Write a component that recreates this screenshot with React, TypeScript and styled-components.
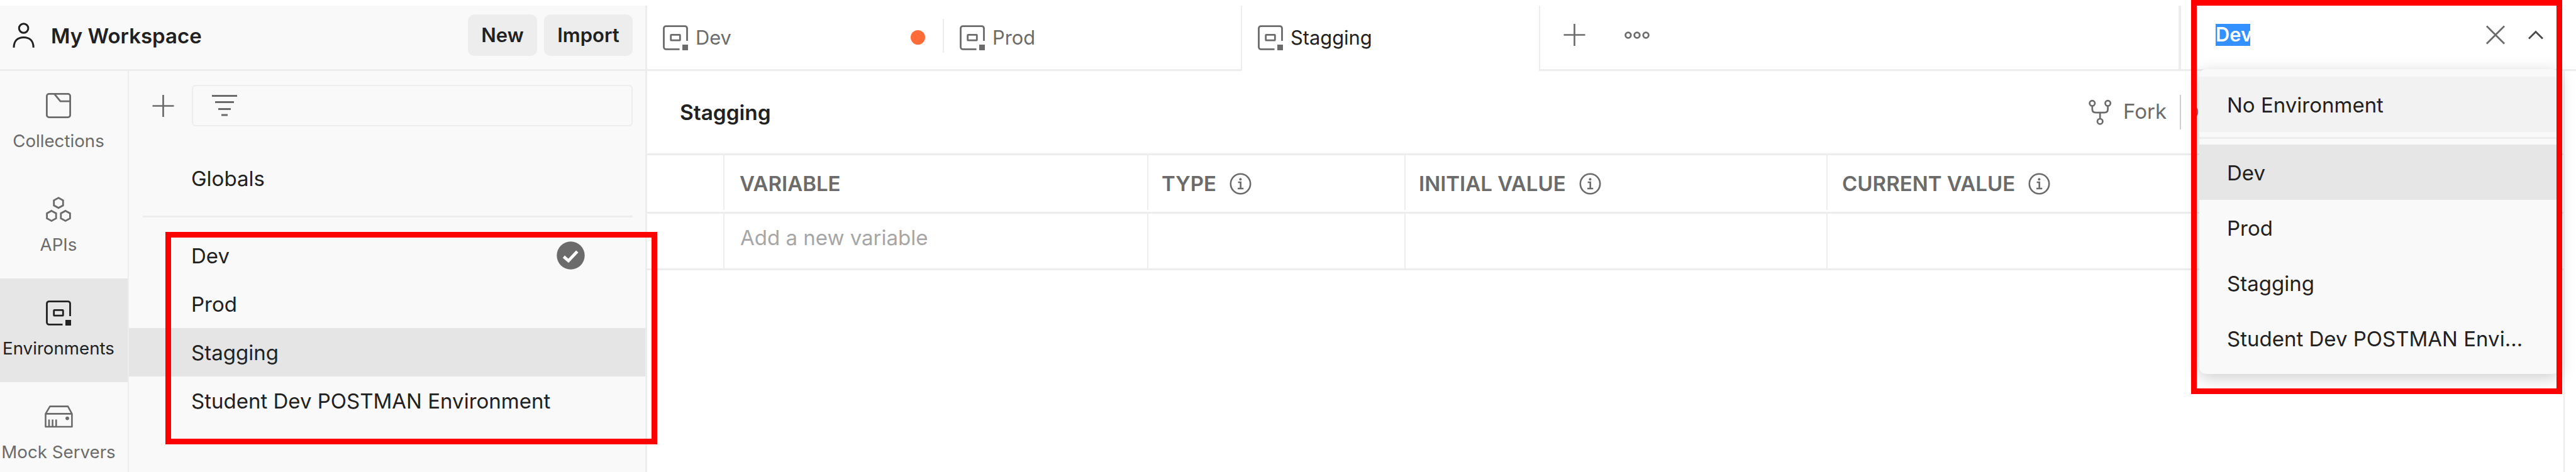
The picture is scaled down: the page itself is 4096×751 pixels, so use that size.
import React from 'react';
import styled, { createGlobalStyle, css } from 'styled-components';

const line = '#ededed';
const ink = '#212121';
const muted = '#6b6b6b';

const GlobalStyle = createGlobalStyle`
  * { box-sizing: border-box; }
  html, body { margin: 0; padding: 0; background: #fff; overflow: hidden; }
  body {
    font-family: Inter, "Liberation Sans", sans-serif;
    font-size: 33px;
    line-height: 40px;
    color: ${ink};
  }
  svg { display: block; flex: none; }
`;

const Page = styled.div`
  position: relative;
  display: flex;
  width: 4096px;
  height: 751px;
  padding-top: 9px;
  overflow: hidden;
  background: #fff;
`;

/* ---------- left column ---------- */

const LeftColumn = styled.div`
  display: flex;
  flex-direction: column;
  flex: none;
  width: 1029px;
  background: #f9f9f9;
  border-right: 3px solid ${line};
`;

const WorkspaceHeader = styled.header`
  display: flex;
  align-items: center;
  flex: none;
  height: 104px;
  padding: 0 20px 8px;
  border-bottom: 3px solid ${line};
`;

const WorkspaceName = styled.div`
  flex: 1;
  margin: 2px 0 0 25px;
  font-weight: 600;
`;

const HeaderButton = styled.button<{ $width: number }>`
  width: ${p => p.$width}px;
  height: 66px;
  margin-left: 11px;
  padding: 0;
  border: 0;
  border-radius: 10px;
  background: #ededed;
  color: ${ink};
  font: 600 31px/66px Inter, "Liberation Sans", sans-serif;
  text-align: center;
`;

const LeftBody = styled.div`
  display: flex;
  flex: 1;
  min-height: 0;
`;

const Rail = styled.nav`
  flex: none;
  width: 205px;
  overflow: hidden;
  border-right: 2px solid ${line};
`;

const RailItem = styled.div<{ $active?: boolean }>`
  display: flex;
  flex-direction: column;
  align-items: center;
  height: 165px;
  padding: 35px 17px 0 0;
  font-size: 27.7px;
  white-space: nowrap;
  color: ${p => (p.$active ? ink : muted)};
  background: ${p => (p.$active ? '#e6e6e6' : 'transparent')};
`;

const RailIcon = styled.div`
  display: flex;
  align-items: center;
  justify-content: center;
  height: 40px;
  margin-bottom: 16px;
`;

const Sidebar = styled.aside`
  flex: 1;
  min-width: 0;
`;

const SidebarTools = styled.div`
  display: flex;
  align-items: center;
  height: 110px;
  padding: 0 20px 0 37px;
`;

const FilterBox = styled.div`
  display: flex;
  align-items: center;
  flex: 1;
  height: 66px;
  margin-left: 28px;
  padding-left: 30px;
  border: 2px solid ${line};
  border-radius: 6px;
`;

const GlobalsRow = styled.div`
  height: 123px;
  margin: 0 20px 0 22px;
  padding: 41px 0 0 77px;
  border-bottom: 3px solid ${line};
`;

const EnvironmentList = styled.div`
  padding-top: 22px;
`;

const EnvironmentRow = styled.div<{ $active?: boolean }>`
  display: flex;
  align-items: center;
  justify-content: space-between;
  height: 77px;
  padding: 0 96px 0 99px;
  white-space: nowrap;
  background: ${p => (p.$active ? '#e5e5e5' : 'transparent')};
`;

/* ---------- main area ---------- */

const Main = styled.main`
  display: flex;
  flex-direction: column;
  flex: 1;
  min-width: 0;
`;

const TabBar = styled.div`
  display: flex;
  flex: none;
  height: 104px;
`;

const Tab = styled.div<{ $active?: boolean }>`
  display: flex;
  align-items: center;
  flex: none;
  width: 472px;
  padding-left: 25px;
  font-size: 30.8px;
  color: ${muted};
  border-bottom: 3px solid ${line};
  ${p =>
    p.$active &&
    css`
      width: 476px;
      padding: 0 0 3px 25px;
      color: ${ink};
      border: solid ${line};
      border-width: 0 2px;
    `}
`;

const TabLabel = styled.span`
  flex: 1;
  margin-left: 12px;
`;

const UnsavedDot = styled.span`
  width: 23px;
  height: 23px;
  margin-right: 28px;
  border-radius: 50%;
  background: #ff6c37;
`;

const TabDivider = styled.span`
  width: 2px;
  height: 54px;
  margin-bottom: 6px;
  background: ${line};
`;

const TabActions = styled.div`
  display: flex;
  align-items: center;
  flex: 1;
  gap: 62px;
  padding: 0 0 8px 37px;
  border-bottom: 3px solid ${line};
`;

const EnvSelector = styled.div`
  position: relative;
  display: flex;
  align-items: center;
  flex: none;
  width: 632px;
  padding: 0 52px 8px 55px;
  border-left: 4px solid ${line};
  border-bottom: 3px solid ${line};
`;

const SelectedText = styled.span`
  width: 55px;
  height: 35px;
  margin-right: auto;
  font-size: 30.8px;
  font-weight: 600;
  line-height: 34px;
  color: #fff;
  background: #3390ff;
`;

const ChevronSlot = styled.span`
  margin-left: 37px;
`;

const EnvMenu = styled.div`
  position: absolute;
  top: 101px;
  left: 29px;
  z-index: 2;
  width: 572px;
  height: 485px;
  padding-top: 12px;
  border-radius: 10px;
  background: #f9f9f9;
  box-shadow: 0 6px 26px rgba(0, 0, 0, 0.2);
`;

const MenuItem = styled.div<{ $tone?: string }>`
  height: 88px;
  padding: 1px 50px 0 44px;
  line-height: 88px;
  white-space: nowrap;
  background: ${p => p.$tone || 'transparent'};
`;

const MenuDivider = styled.div`
  height: 3px;
  margin: 8px 0 9px;
  background: ${line};
`;

const Content = styled.section`
  flex: 1;
  width: 3049px;
  border-right: 2px solid ${line};
`;

const TitleRow = styled.div`
  display: flex;
  align-items: center;
  height: 134px;
  padding-left: 52px;
  border-bottom: 3px solid ${line};
`;

const Title = styled.h1`
  flex: 1;
  margin: 0;
  font-size: 33.4px;
  font-weight: 600;
  line-height: 40px;
`;

const ForkAction = styled.div`
  display: flex;
  align-items: center;
  width: 145px;
  color: ${muted};
`;

const ForkLabel = styled.span`
  margin: -3px 0 0 18px;
`;

const ActionDivider = styled.span`
  width: 2px;
  height: 55px;
  background: #d0d0d0;
`;

const ForkCount = styled.span`
  width: 608px;
  padding-left: 15px;
  font-size: 21px;
  color: ${muted};
`;

const TableRow = styled.div<{ $head?: boolean }>`
  display: grid;
  grid-template-columns: 123px 674px 409px 671px 1fr;
  height: ${p => (p.$head ? 93 : 90)}px;
  padding-bottom: ${p => (p.$head ? 3 : 0)}px;
  border-bottom: 3px solid ${line};
`;

const Cell = styled.div<{ $pad?: number; $head?: boolean }>`
  display: flex;
  align-items: center;
  padding: ${p => (p.$head ? '3px 0 0' : '0 0 11px')};
  padding-left: ${p => p.$pad || 0}px;
  font-weight: ${p => (p.$head ? 600 : 400)};
  color: ${p => (p.$head ? muted : '#a6a6a6')};
  border-right: 2px solid ${line};
  &:last-child { border-right: 0; }
  svg { margin-left: 21px; }
`;

const Highlight = styled.div<{ $x: number; $y: number; $w: number; $h: number }>`
  position: absolute;
  z-index: 5;
  left: ${p => p.$x}px;
  top: ${p => p.$y}px;
  width: ${p => p.$w}px;
  height: ${p => p.$h}px;
  border: 9px solid #ff0000;
  pointer-events: none;
`;

/* ---------- icons ---------- */

const UserIcon = () => (
  <svg width="36" height="40" viewBox="0 0 36 40" fill="none" stroke={ink} strokeWidth="3">
    <circle cx="17.6" cy="9" r="7.3" />
    <path d="M2 39.8C2 29 8 23.4 17.6 23.4S33.2 29 33.2 39.8" />
  </svg>
);

const CollectionIcon = () => (
  <svg width="40" height="40" viewBox="0 0 40 40" fill="none" stroke={muted} strokeWidth="2.8">
    <rect x="1.4" y="1.4" width="37.2" height="37.2" rx="3.5" />
    <path d="M13.6 1.6L23 13.2H38.4" />
  </svg>
);

const ApiIcon = () => (
  <svg width="40" height="40" viewBox="0 0 40 40" fill="none" stroke={muted} strokeWidth="2.8">
    <path d="M20 1.8l7.3 4v8l-7.3 4-7.3-4v-8z" />
    <path d="M8.9 22.4l7.3 4v8l-7.3 4-7.3-4v-8z" />
    <path d="M31.1 22.4l7.3 4v8l-7.3 4-7.3-4v-8z" />
  </svg>
);

const EnvironmentIcon = ({ color = muted }: { color?: string }) => (
  <svg width="40" height="40" viewBox="0 0 40 40" fill="none" stroke={color} strokeWidth="2.8">
    <path d="M26.5 38.4H5A3.5 3.5 0 0 1 1.5 35V5A3.5 3.5 0 0 1 5 1.6H35A3.5 3.5 0 0 1 38.5 5V25" />
    <rect x="12.7" y="15.4" width="14.6" height="8.8" rx="0.8" />
    <rect x="31" y="31" width="9" height="9" fill={color} stroke="none" />
  </svg>
);

const MockServerIcon = () => (
  <svg width="45" height="36" viewBox="0 0 45 36" fill="none" stroke={muted} strokeWidth="2.6">
    <path d="M1.5 13.4L8.4 1.6H37L43.4 13.4V34H1.5zM1.5 13.4H43.4" strokeLinejoin="round" />
    <path d="M7 22.5V34M12.6 22.5V34M18.3 22.5V34" />
    <circle cx="36" cy="20.6" r="2.9" fill={muted} stroke="none" />
  </svg>
);

const PlusIcon = () => (
  <svg width="35" height="35" viewBox="0 0 35 35" stroke={muted} strokeWidth="2.7">
    <path d="M17.5 0V35M0.5 17.5H34.5" />
  </svg>
);

const FilterIcon = () => (
  <svg width="40" height="36" viewBox="0 0 40 36" stroke={muted} strokeWidth="2.8">
    <path d="M0 2.5H40M5 12.5H35M10 23.5H30M15 33H25" />
  </svg>
);

const CheckedIcon = () => (
  <svg width="45" height="45" viewBox="0 0 45 45" fill="none">
    <circle cx="22.5" cy="22.5" r="22.2" fill={muted} />
    <path d="M11.4 24.4L18.9 31L32.8 16.2" stroke="#fff" strokeWidth="4.8" />
  </svg>
);

const MoreIcon = () => (
  <svg width="40" height="14" viewBox="0 0 40 14" fill="none" stroke={muted} strokeWidth="2.8">
    <circle cx="5.9" cy="7" r="4.3" />
    <circle cx="20" cy="7" r="4.3" />
    <circle cx="34.1" cy="7" r="4.3" />
  </svg>
);

const CloseIcon = () => (
  <svg width="30" height="31" viewBox="0 0 30 31" stroke={muted} strokeWidth="2.8">
    <path d="M1 1.5L29 29.5M29 1.5L1 29.5" />
  </svg>
);

const ChevronUpIcon = () => (
  <svg width="24" height="15" viewBox="0 0 24 15" fill="none" stroke="#4a4a4a" strokeWidth="3">
    <path d="M1 13.5L12 2.5L23 13.5" />
  </svg>
);

const ForkIcon = () => (
  <svg width="37" height="41" viewBox="0 0 37 41" fill="none" stroke={muted} strokeWidth="2.7">
    <circle cx="5.8" cy="6.3" r="4.2" />
    <circle cx="30.6" cy="6.3" r="4.2" />
    <circle cx="18.2" cy="35.2" r="4.2" />
    <path d="M5.8 10.5V15.5Q5.8 21.2 11.5 21.2H25Q30.6 21.2 30.6 15.5V10.5M18.2 21.2V31" />
  </svg>
);

const InfoIcon = () => (
  <svg width="35" height="35" viewBox="0 0 35 35" fill="none" stroke={muted} strokeWidth="2.6">
    <circle cx="17.5" cy="17.5" r="15.7" />
    <path d="M13.6 15H17.7V25M13 25H22.3" />
    <circle cx="17.4" cy="10.2" r="2" fill={muted} stroke="none" />
  </svg>
);

/* ---------- data ---------- */

const railItems = [
  { label: 'Collections', icon: <CollectionIcon /> },
  { label: 'APIs', icon: <ApiIcon /> },
  { label: 'Environments', icon: <EnvironmentIcon color={ink} />, active: true },
  { label: 'Mock Servers', icon: <MockServerIcon /> },
];

const environments = [
  { name: 'Dev', checked: true },
  { name: 'Prod' },
  { name: 'Stagging', active: true },
  { name: 'Student Dev POSTMAN Environment' },
];

const columns = [
  { label: 'VARIABLE', pad: 24 },
  { label: 'TYPE', pad: 21, info: true },
  { label: 'INITIAL VALUE', pad: 21, info: true },
  { label: 'CURRENT VALUE', pad: 23, info: true },
];

export default function App() {
  return (
    <>
      <GlobalStyle />
      <Page>
        <LeftColumn>
          <WorkspaceHeader>
            <UserIcon />
            <WorkspaceName>My Workspace</WorkspaceName>
            <HeaderButton $width={110}>New</HeaderButton>
            <HeaderButton $width={141}>Import</HeaderButton>
          </WorkspaceHeader>
          <LeftBody>
            <Rail>
              {railItems.map(item => (
                <RailItem key={item.label} $active={item.active}>
                  <RailIcon>{item.icon}</RailIcon>
                  {item.label}
                </RailItem>
              ))}
            </Rail>
            <Sidebar>
              <SidebarTools>
                <PlusIcon />
                <FilterBox>
                  <FilterIcon />
                </FilterBox>
              </SidebarTools>
              <GlobalsRow>Globals</GlobalsRow>
              <EnvironmentList>
                {environments.map(env => (
                  <EnvironmentRow key={env.name} $active={env.active}>
                    {env.name}
                    {env.checked && <CheckedIcon />}
                  </EnvironmentRow>
                ))}
              </EnvironmentList>
            </Sidebar>
          </LeftBody>
        </LeftColumn>

        <Main>
          <TabBar>
            <Tab>
              <EnvironmentIcon />
              <TabLabel>Dev</TabLabel>
              <UnsavedDot />
              <TabDivider />
            </Tab>
            <Tab>
              <EnvironmentIcon />
              <TabLabel>Prod</TabLabel>
            </Tab>
            <Tab $active>
              <EnvironmentIcon />
              <TabLabel>Stagging</TabLabel>
            </Tab>
            <TabActions>
              <PlusIcon />
              <MoreIcon />
            </TabActions>
            <EnvSelector>
              <SelectedText>Dev</SelectedText>
              <CloseIcon />
              <ChevronSlot>
                <ChevronUpIcon />
              </ChevronSlot>
              <EnvMenu>
                <MenuItem $tone="#f2f2f2">No Environment</MenuItem>
                <MenuDivider />
                <MenuItem $tone="#e6e6e6">Dev</MenuItem>
                <MenuItem>Prod</MenuItem>
                <MenuItem>Stagging</MenuItem>
                <MenuItem>Student Dev POSTMAN Envi...</MenuItem>
              </EnvMenu>
            </EnvSelector>
          </TabBar>

          <Content>
            <TitleRow>
              <Title>Stagging</Title>
              <ForkAction>
                <ForkIcon />
                <ForkLabel>Fork</ForkLabel>
              </ForkAction>
              <ActionDivider />
              <ForkCount>0</ForkCount>
            </TitleRow>
            <TableRow $head>
              <Cell $head />
              {columns.map(col => (
                <Cell key={col.label} $head $pad={col.pad}>
                  {col.label}
                  {col.info && <InfoIcon />}
                </Cell>
              ))}
            </TableRow>
            <TableRow>
              <Cell />
              <Cell $pad={25}>Add a new variable</Cell>
              <Cell />
              <Cell />
              <Cell />
            </TableRow>
          </Content>
        </Main>

        <Highlight $x={263} $y={369} $w={782} $h={338} />
        <Highlight $x={3484} $y={0} $w={590} $h={627} />
      </Page>
    </>
  );
}
